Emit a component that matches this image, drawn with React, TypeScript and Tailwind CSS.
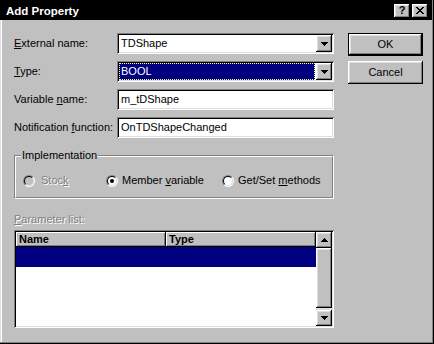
const raised =
	"shadow-[inset_-1px_-1px_0_#000,inset_1px_1px_0_#fff,inset_-2px_-2px_0_#808080,inset_2px_2px_0_#dfdfdf]";
const headerRaised = "shadow-[inset_-1px_-1px_0_#000,inset_1px_1px_0_#fff,inset_-2px_-2px_0_#808080]";
const sunken =
	"shadow-[inset_1px_1px_0_#808080,inset_-1px_-1px_0_#fff,inset_2px_2px_0_#000,inset_-2px_-2px_0_#dfdfdf]";
const disabledText = "text-[#808080] [text-shadow:1px_1px_0_#fff]";

function U({ children }: { children: string }) {
	return <span className="underline underline-offset-[1px]">{children}</span>;
}

function ArrowDown() {
	return (
		<svg width="7" height="4" viewBox="0 0 7 4" shapeRendering="crispEdges">
			<path d="M0 0h7v1H0zM1 1h5v1H1zM2 2h3v1H2zM3 3h1v1H3z" fill="#000" />
		</svg>
	);
}

function ArrowUp() {
	return (
		<svg width="7" height="4" viewBox="0 0 7 4" shapeRendering="crispEdges">
			<path d="M3 0h1v1H3zM2 1h3v1H2zM1 2h5v1H1zM0 3h7v1H0z" fill="#000" />
		</svg>
	);
}

function DropButton() {
	return (
		<div className={`w-[16px] my-[2px] mr-[2px] flex items-center justify-center bg-[#c0c0c0] ${raised}`}>
			<ArrowDown />
		</div>
	);
}

function Radio({ checked = false, disabled = false }: { checked?: boolean; disabled?: boolean }) {
	return (
		<span className="w-[12px] h-[12px] shrink-0 rounded-full border border-t-[#808080] border-l-[#808080] border-b-white border-r-white flex">
			<span
				className={`flex-1 rounded-full border border-t-black border-l-black border-b-[#dfdfdf] border-r-[#dfdfdf] flex items-center justify-center ${disabled ? "bg-[#c0c0c0]" : "bg-white"}`}
			>
				{checked && <span className="w-[4px] h-[4px] rounded-full bg-black" />}
			</span>
		</span>
	);
}

function Row({ label, children }: { label: React.ReactNode; children: React.ReactNode }) {
	return (
		<div className="flex items-center h-[21px]">
			<div className="w-[103px] leading-[13px]">{label}</div>
			{children}
		</div>
	);
}

export default function App() {
	return (
		<div
			className="w-[434px] h-[344px] bg-[#c0c0c0] text-black text-[11px] font-['Liberation_Sans',Arial,sans-serif] shadow-[inset_-1px_-1px_0_#000,inset_-2px_-2px_0_#808080,inset_1px_0_0_#dfdfdf,inset_2px_0_0_#fff] overflow-hidden"
		>
			{/* title bar */}
			<div className="h-[20px] mr-[2px] bg-black flex items-center pl-[6px] pr-[4px]">
				<span className="text-white font-bold text-[11.5px] leading-[13px] pt-[3px]">Add Property</span>
				<div className="ml-auto flex gap-[2px] mt-[2px]">
					<div className={`w-[16px] h-[14px] bg-[#c0c0c0] flex items-center justify-center ${raised}`}>
						<span className="font-bold text-[11px] leading-[11px] -mt-[1px]">?</span>
					</div>
					<div className={`w-[16px] h-[14px] bg-[#c0c0c0] flex items-center justify-center ${raised}`}>
						<svg width="8" height="7" viewBox="0 0 8 7" shapeRendering="crispEdges" className="-mt-[1px]">
							<path
								d="M0 0h2v1H0zM6 0h2v1H6zM1 1h2v1H1zM5 1h2v1H5zM2 2h4v1H2zM3 3h2v1H3zM2 4h4v1H2zM1 5h2v1H1zM5 5h2v1H5zM0 6h2v1H0zM6 6h2v1H6z"
								fill="#000"
							/>
						</svg>
					</div>
				</div>
			</div>

			<div className="flex pl-[14px] pt-[13px]">
				<div className="w-[320px] flex flex-col">
					<div className="flex flex-col gap-[7px]">
						<Row label={<><U>E</U>xternal name:</>}>
							<div className={`flex-1 h-[21px] bg-white flex ${sunken}`}>
								<span className="flex-1 pl-[4px] leading-[21px]">TDShape</span>
								<DropButton />
							</div>
						</Row>
						<Row label={<><U>T</U>ype:</>}>
							<div className={`flex-1 h-[21px] bg-white flex ${sunken}`}>
								<div className="flex-1 ml-[2px] mr-[1px] my-[2px] bg-[#000080] border border-dotted border-[#ffff99] flex items-center">
									<span className="pl-[1px] text-white leading-[13px]">BOOL</span>
								</div>
								<DropButton />
							</div>
						</Row>
						<Row label={<>Variable <U>n</U>ame:</>}>
							<div className={`flex-1 h-[21px] bg-white flex items-center ${sunken}`}>
								<span className="pl-[4px] leading-[13px]">m_tDShape</span>
							</div>
						</Row>
						<Row label={<>Notification <U>f</U>unction:</>}>
							<div className={`flex-1 h-[21px] bg-white flex items-center ${sunken}`}>
								<span className="pl-[4px] leading-[13px]">OnTDShapeChanged</span>
							</div>
						</Row>
					</div>

					{/* group box */}
					<div className="mt-[17px] h-[44px] border border-t-[#808080] border-l-[#808080] border-b-white border-r-white">
						<div className="h-full relative border border-t-white border-l-white border-b-[#808080] border-r-[#808080]">
							<span className="absolute -top-[8px] left-[5px] px-[1px] bg-[#c0c0c0] leading-[13px]">
								Implementation
							</span>
							<div className="h-full flex items-center pt-[7px] pl-[7px]">
								<label className="w-[83px] flex items-center gap-[6px]">
									<Radio disabled />
									<span className={`leading-[13px] ${disabledText}`}>
										Stoc<U>k</U>
									</span>
								</label>
								<label className="w-[116px] flex items-center gap-[4px]">
									<Radio checked />
									<span className="leading-[13px]">
										Member <U>v</U>ariable
									</span>
								</label>
								<label className="flex items-center gap-[4px]">
									<Radio />
									<span className="leading-[13px]">
										Get/Set <U>m</U>ethods
									</span>
								</label>
							</div>
						</div>
					</div>

					<div className={`mt-[14px] leading-[13px] ${disabledText}`}>
						<U>P</U>arameter list:
					</div>

					{/* parameter list */}
					<div className={`mt-[4px] h-[98px] bg-white p-[2px] flex ${sunken}`}>
						<div className="flex-1 flex flex-col">
							<div className="h-[15px] flex font-bold">
								<div className={`w-[150px] bg-[#c0c0c0] pl-[3px] leading-[15px] ${headerRaised}`}>Name</div>
								<div className={`flex-1 bg-[#c0c0c0] pl-[3px] leading-[15px] ${headerRaised}`}>Type</div>
							</div>
							<div className="h-[20px] bg-[#000080]" />
						</div>
						<div className="w-[16px] flex flex-col bg-[#dfdfdf]">
							<div className={`h-[16px] bg-[#c0c0c0] flex items-center justify-center ${raised}`}>
								<ArrowUp />
							</div>
							<div className={`flex-1 mb-[2px] bg-[#c0c0c0] ${raised}`} />
							<div className={`h-[16px] bg-[#c0c0c0] flex items-center justify-center ${raised}`}>
								<ArrowDown />
							</div>
						</div>
					</div>
				</div>

				<div className="ml-[14px] flex flex-col gap-[5px]">
					<button className="w-[75px] h-[23px] border border-black bg-[#c0c0c0] flex items-center justify-center">
						<span
							className={`w-full h-full flex items-center justify-center leading-[13px] ${raised}`}
						>
							OK
						</span>
					</button>
					<button
						className={`w-[75px] h-[23px] bg-[#c0c0c0] flex items-center justify-center leading-[13px] ${raised}`}
					>
						Cancel
					</button>
				</div>
			</div>
		</div>
	);
}
